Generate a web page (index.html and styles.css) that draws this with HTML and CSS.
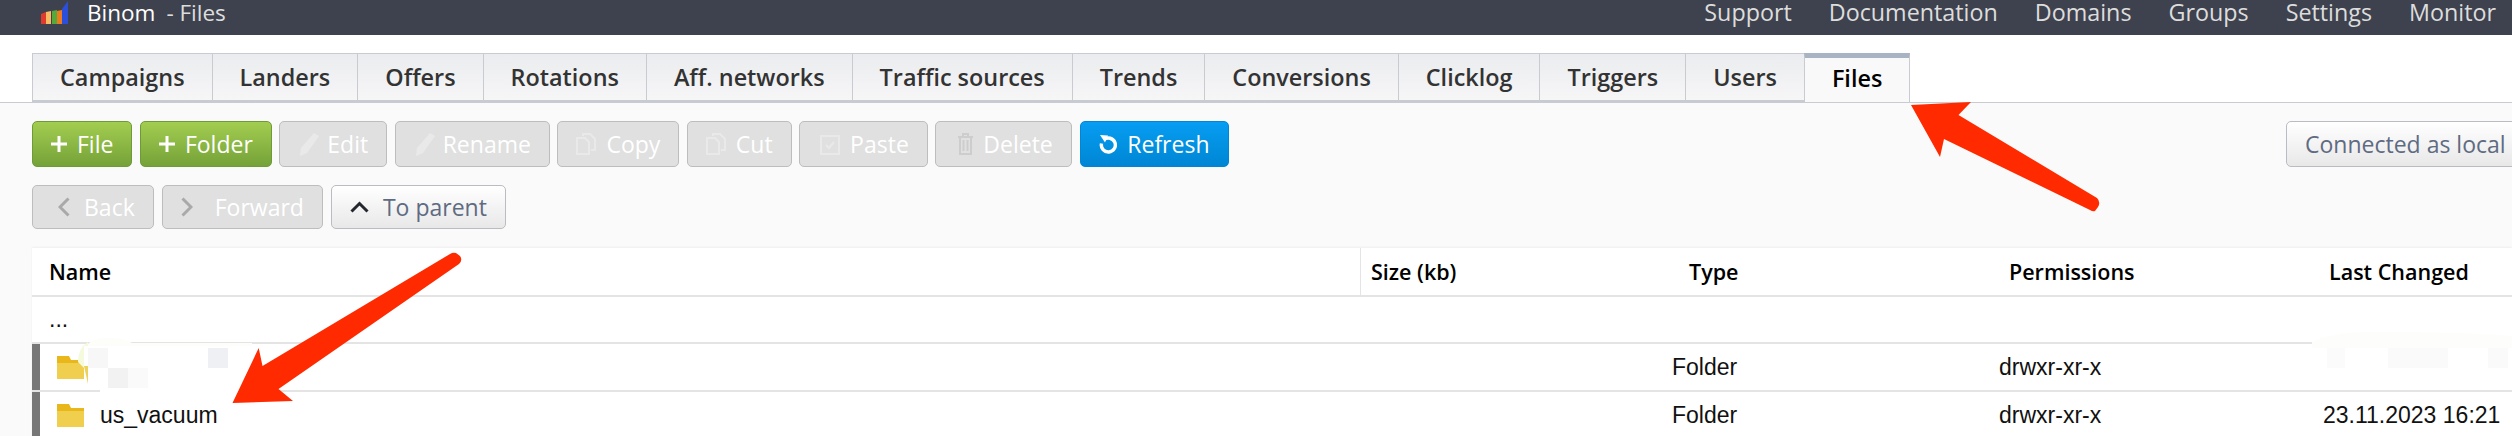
FILE: index.html
```html
<!DOCTYPE html>
<html lang="en">
<head>
<meta charset="UTF-8">
<meta name="viewport" content="width=device-width, initial-scale=1.0">
<title>Binom - Files</title>
<link rel="stylesheet" href="styles.css">
</head>
<body>
<header class="topbar">
    <div class="brand">
        <svg class="logo" viewBox="0 0 27 23" width="27" height="23">
            <path fill="#e03a2c" d="M0 13l5-2v12H0z"/>
            <path fill="#f8bb63" d="M5 11l5-1v13H5z"/>
            <path fill="#55a93c" d="M11 10l5-1v14h-5z"/>
            <path fill="#ee7a1e" d="M16 10l5-1v14h-5z"/>
            <path fill="#2b4fd8" d="M21 8l6-8v23h-6z"/>
        </svg>
        <span class="brand-name">Binom</span>
        <span class="brand-page">- Files</span>
    </div>
    <nav class="topnav">
        <a>Support</a>
        <a>Documentation</a>
        <a>Domains</a>
        <a>Groups</a>
        <a>Settings</a>
        <a>Monitor</a>
    </nav>
</header>

<div class="tabs">
    <a class="tab">Campaigns</a>
    <a class="tab">Landers</a>
    <a class="tab">Offers</a>
    <a class="tab">Rotations</a>
    <a class="tab">Aff. networks</a>
    <a class="tab">Traffic sources</a>
    <a class="tab">Trends</a>
    <a class="tab">Conversions</a>
    <a class="tab">Clicklog</a>
    <a class="tab">Triggers</a>
    <a class="tab">Users</a>
    <a class="tab tab-active">Files</a>
</div>

<main class="content">
    <div class="toolbar">
        <button class="btn btn-green"><svg class="ico" viewBox="0 0 16 16" width="16" height="16"><path fill="#fff" d="M6.5 0h3v6.5H16v3H9.5V16h-3V9.500H0v-3h6.500z"/></svg>File</button>
        <button class="btn btn-green"><svg class="ico" viewBox="0 0 16 16" width="16" height="16"><path fill="#fff" d="M6.5 0h3v6.5H16v3H9.5V16h-3V9.500H0v-3h6.500z"/></svg>Folder</button>
        <button class="btn btn-off"><svg class="ico ico-pen" viewBox="0 0 22 24" width="22" height="24"><path fill="#e9e9e9" d="M16 1l5 3-12 17-7 3 1-8z"/></svg>Edit</button>
        <button class="btn btn-off"><svg class="ico ico-pen" viewBox="0 0 22 24" width="22" height="24"><path fill="#e9e9e9" d="M16 1l5 3-12 17-7 3 1-8z"/></svg>Rename</button>
        <button class="btn btn-off"><svg class="ico" viewBox="0 0 20 22" width="20" height="22"><path fill="none" stroke="#e9e9e9" stroke-width="2" d="M7 3V1h7l5 5v11h-4M1 5h8l4 4v12H1z"/></svg>Copy</button>
        <button class="btn btn-off"><svg class="ico" viewBox="0 0 20 22" width="20" height="22"><path fill="none" stroke="#e9e9e9" stroke-width="2" d="M7 3V1h7l5 5v11h-4M1 5h8l4 4v12H1z"/></svg>Cut</button>
        <button class="btn btn-off btn-paste"><svg class="ico" viewBox="0 0 20 22" width="20" height="22"><path fill="none" stroke="#e9e9e9" stroke-width="2" d="M1 3h18v18H1zM6 12l3 3 5-6"/></svg>Paste</button>
        <button class="btn btn-off btn-delete"><svg class="ico" viewBox="0 0 15 22" width="15" height="22"><path fill="none" stroke="#cdcdcd" stroke-width="2" d="M0 4h15M5 4V1h5v3M2 4v17h11V4M5.500 7v11M9.500 7v11"/></svg>Delete</button>
        <button class="btn btn-blue"><svg class="ico" viewBox="0 0 18 20" width="18" height="20"><path fill="none" stroke="#fff" stroke-width="3.400" d="M5 5.500a7 7 0 1 1-2.500 4"/><path fill="#fff" d="M1 1l8 .5-3 7z"/></svg>Refresh</button>
        <button class="btn btn-light btn-conn">Connected as local</button>
    </div>
    <div class="toolbar toolbar-nav">
        <button class="btn btn-off btn-back"><svg class="ico ico-wide" viewBox="0 0 12 20" width="12" height="20"><path fill="none" stroke="#a9a9a9" stroke-width="3" d="M10.500 1.500L2 10l8.500 8.500"/></svg>Back</button>
        <button class="btn btn-off"><svg class="ico ico-wider" viewBox="0 0 12 20" width="12" height="20"><path fill="none" stroke="#a9a9a9" stroke-width="3" d="M1.500 1.500L10 10l-8.500 8.500"/></svg>Forward</button>
        <button class="btn btn-light"><svg class="ico ico-wide" viewBox="0 0 19 12" width="19" height="12"><path fill="none" stroke="#24272e" stroke-width="3" d="M1.500 10.500L9.500 2.500l8 8"/></svg>To parent</button>
    </div>

    <div class="files">
        <div class="row row-head">
            <div class="cell c-name">Name</div>
            <div class="cell c-size">Size (kb)</div>
            <div class="cell c-type">Type</div>
            <div class="cell c-perm">Permissions</div>
            <div class="cell c-date">Last Changed</div>
        </div>
        <div class="row row-up">
            <div class="cell c-name">...</div>
        </div>
        <div class="row row-folder">
            <div class="cell c-name">
                <svg class="folder" viewBox="0 0 27 23" width="27" height="23"><path fill="#eab71b" d="M0 0h12l2 4h13v4H0z"/><path fill="#f0cf4f" d="M0 7h27v16H0z"/></svg>
            </div>
            <div class="cell c-size"></div>
            <div class="cell c-type">Folder</div>
            <div class="cell c-perm">drwxr-xr-x</div>
            <div class="cell c-date"></div>
        </div>
        <div class="row row-folder">
            <div class="cell c-name">
                <svg class="folder" viewBox="0 0 27 23" width="27" height="23"><path fill="#eab71b" d="M0 0h12l2 4h13v4H0z"/><path fill="#f0cf4f" d="M0 7h27v16H0z"/></svg>
                us_vacuum
            </div>
            <div class="cell c-size"></div>
            <div class="cell c-type">Folder</div>
            <div class="cell c-perm">drwxr-xr-x</div>
            <div class="cell c-date">23.11.2023 16:21</div>
        </div>
    </div>
</main>

<!-- annotations drawn on top of the screenshot -->
<svg class="marks" viewBox="0 0 2512 436" width="2512" height="436">
    <path fill="#fdfefa" d="M88 344q4-6 20-6 16 0 24 5h120v12H88z"/>
    <path fill="#f5fadc" d="M78 362q0-14 10-20v30z"/>
    <path fill="#fff" d="M84 346h170v46H100v-6H84z"/>
    <path fill="#ecd258" d="M84 366l4 0v18z"/>
    <rect x="88" y="348" width="20" height="20" fill="#f7f7f7"/>
    <rect x="208" y="348" width="20" height="20" fill="#eff0f3"/>
    <rect x="108" y="368" width="20" height="20" fill="#f2f2f2"/>
    <rect x="128" y="368" width="20" height="20" fill="#fafafa"/>
    <path fill="#fdfdfc" d="M2312 342q20-10 60-10 90 0 140 4v12h-200z"/>
    <rect x="2327" y="348" width="185" height="20" fill="#fff"/>
    <rect x="2327" y="348" width="18" height="20" fill="#fbfbfb"/>
    <rect x="2388" y="348" width="60" height="20" fill="#fafafa"/>
    <rect x="2488" y="348" width="20" height="20" fill="#fafafa"/>
    <path fill="#ff2a00" d="M1911 105L1971 102L1958.500 115L2097 198Q2101 202 2098 207L2095 211Q2093 212 2090 210L1944 139L1940 157Z"/>
    <path fill="#ff2a00" d="M232.500 403L293 401L278.500 389L459 264Q463 260 460 256L456 253Q453 252 450 254L262.500 366L258.700 348Z"/>
</svg>
</body>
</html>
```

FILE: styles.css
```css
body {
    font-family: 'Open Sans', sans-serif;
    background-color: #fff;
    margin: 0;
    padding: 0;
    width: 2512px;
    height: 436px;
    overflow: hidden;
    position: relative;
}

.topbar {
    display: flex;
    justify-content: space-between;
    align-items: center;
    height: 24px;
    padding: 0 16px 11px 41px;
    background-color: #3e424e;
    font-size: 23.300px;
    color: #ddd;
}

.brand {
    display: flex;
    align-items: center;
    font-size: 22.500px;
}

.logo {
    margin-right: 19px;
}

.brand-name {
    color: #fff;
    margin-right: 11px;
}

.topnav {
    display: flex;
    gap: 37px;
}

.tabs {
    display: flex;
    height: 49px;
    margin-top: 18px;
    padding-left: 32px;
    border-bottom: 1px solid #c8cbd2;
}

.tab {
    padding: 0 27px;
    line-height: 46px;
    height: 46px;
    font-size: 23.400px;
    font-weight: 600;
    color: #333;
    background: linear-gradient(#ebecef, #f6f6f7);
    border-top: 1px solid #c8cbd2;
    border-left: 1px solid #c8cbd2;
    border-bottom: 2px solid #c8cbd2;
}

.tab-active {
    height: 44px;
    line-height: 40px;
    color: #000;
    background: #f9f9f9;
    border-top: 5px solid #a9b4c2;
    border-right: 1px solid #c8cbd2;
    border-bottom: 0;
}

.content {
    background-color: #fafafa;
    padding: 18px 0 0 32px;
    height: 315px;
}

.toolbar {
    display: flex;
    gap: 7.500px;
    height: 46px;
}

.toolbar-nav {
    height: 44px;
    margin-top: 18px;
    gap: 8px;
}

.btn {
    display: flex;
    align-items: center;
    padding: 0 18px;
    border: 1px solid #bdbdbd;
    border-radius: 5px;
    font-family: 'Open Sans', sans-serif;
    font-size: 23px;
    white-space: nowrap;
}

.ico {
    margin-right: 10px;
}

.ico-pen {
    margin-right: 7px;
}

.ico-wide {
    margin-right: 14px;
}

.ico-wider {
    margin-right: 22px;
}

.btn-back {
    padding-left: 25px;
}

.btn-paste {
    padding-left: 20px;
}

.btn-delete {
    padding-left: 22px;
}

.btn-green {
    color: #fff;
    background: linear-gradient(#a3cd50, #75a239);
    border-color: #6f9a38;
}

.btn-off {
    color: #fff;
    background-color: #e0e0e0;
}

.btn-blue {
    color: #fff;
    background: linear-gradient(#069df2, #0086d4);
    border-color: #0086d4;
    margin-left: 1px;
}

.btn-light {
    color: #5f6b82;
    background: linear-gradient(#fff, #e8e8e8);
    border-color: #b9bcc2;
}

.btn-conn {
    margin-left: 1050px;
    flex-shrink: 0;
}

.files {
    margin-top: 19px;
    background-color: #fff;
    box-shadow: 0 -1px 2px rgba(0, 0, 0, 0.05);
}

.row {
    display: grid;
    grid-template-columns: 1328px 300px 320px 320px 212px;
    align-items: center;
    border-bottom: 2px solid #e4e4e4;
    font-family: 'Liberation Sans', sans-serif;
    font-size: 23px;
    color: #111;
}

.row-head {
    height: 47px;
    font-family: 'Open Sans', sans-serif;
    font-size: 21.500px;
    font-weight: 600;
    color: #000;
}

.row-up {
    height: 45px;
}

.row-folder {
    height: 46px;
    box-shadow: inset 8px 0 0 #777;
}

.cell {
    white-space: nowrap;
}

.c-name {
    display: flex;
    align-items: center;
    padding-left: 17px;
}

.row-folder .c-name {
    padding-left: 25px;
}

.folder {
    margin-right: 16px;
}

.row-head .c-size {
    height: 47px;
    line-height: 47px;
    padding-left: 10px;
    border-left: 1px solid #e4e4e4;
}

.c-type {
    padding-left: 12px;
}

.row-head .c-type {
    padding-left: 29px;
}

.c-perm {
    padding-left: 19px;
}

.row-head .c-perm {
    padding-left: 29px;
}

.c-date {
    padding-left: 23px;
}

.row-head .c-date {
    padding-left: 29px;
}

.marks {
    position: absolute;
    left: 0;
    top: 0;
    pointer-events: none;
}
```
